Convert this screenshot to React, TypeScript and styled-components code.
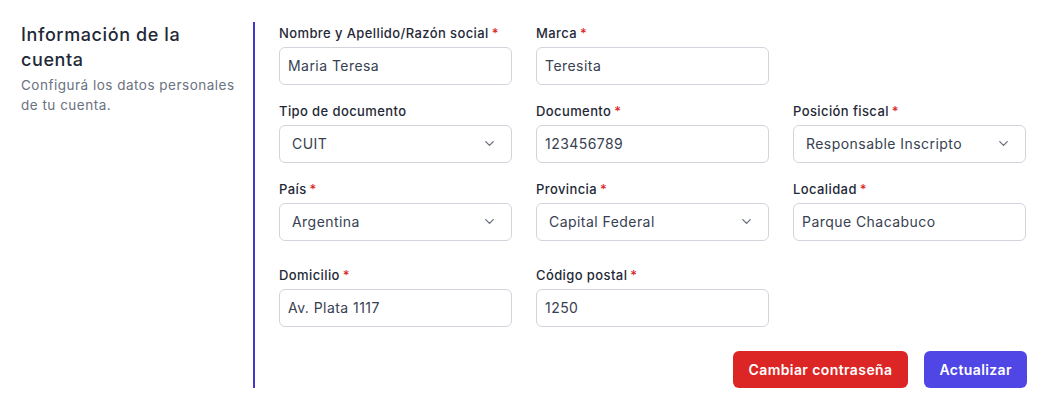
import React from "react";
import styled, { createGlobalStyle } from "styled-components";

const Global = createGlobalStyle`
  html, body { margin: 0; padding: 0; background: #ffffff; }
  body { font-family: "Inter", "Open Sans", sans-serif; color: #1f2937; }
  * { box-sizing: border-box; }
`;

const Page = styled.div`
  display: flex;
  align-items: stretch;
  padding: 22px 23px 19px 0;
  width: 1050px;
`;

const Aside = styled.aside`
  width: 253px;
  padding: 0 16px 0 21px;
  flex-shrink: 0;
`;

const Title = styled.h2`
  margin: 0;
  font-size: 18px;
  font-weight: 500;
  line-height: 25px;
  letter-spacing: 0.6px;
  color: #1f2937;
`;

const Subtitle = styled.p`
  margin: 4px 0 0;
  font-size: 13.5px;
  line-height: 19.5px;
  letter-spacing: 0.5px;
  color: #6b7280;
`;

const FormArea = styled.section`
  flex: 1;
  border-left: 2px solid #4338ca;
  padding: 2px 0 0 24px;
  display: flex;
  flex-direction: column;
`;

const Grid = styled.div`
  display: grid;
  grid-template-columns: repeat(3, 233px);
  column-gap: 24px;
  row-gap: 17px;
`;

const Field = styled.div<{ $spaced?: boolean; $col?: number }>`
  display: flex;
  flex-direction: column;
  gap: 5px;
  margin-top: ${(p) => (p.$spaced ? "8px" : "0")};
  grid-column: ${(p) => (p.$col ? `${p.$col}` : "auto")};
`;

const Label = styled.label`
  font-size: 13px;
  line-height: 18px;
  font-weight: 500;
  color: #1f2937;
  letter-spacing: 0.4px;
`;

const Star = styled.span`
  color: #dc2626;
  margin-left: 3px;
`;

const Box = styled.div<{ $select?: boolean }>`
  height: 38px;
  border: 1px solid #d1d5db;
  border-radius: 6px;
  display: flex;
  align-items: center;
  justify-content: space-between;
  padding: 0 ${(p) => (p.$select ? "14px 1px 12px" : "8px 1px")};
  font-size: 14px;
  color: #374151;
  letter-spacing: 0.45px;
  background: #fff;
`;

const Chevron = styled.svg`
  width: 15px;
  height: 15px;
  color: #6b7280;
`;

const Actions = styled.div`
  display: flex;
  justify-content: flex-end;
  gap: 16px;
  margin-top: 24px;
`;

const Button = styled.button<{ $variant: "danger" | "primary" }>`
  height: 37px;
  border: none;
  border-radius: 6px;
  padding: 0 ${(p) => (p.$variant === "danger" ? "16px" : "15px")};
  background: ${(p) => (p.$variant === "danger" ? "#dc2626" : "#4f46e5")};
  color: #fff;
  font-family: inherit;
  font-size: 14px;
  font-weight: 600;
  letter-spacing: 0.4px;
  cursor: pointer;
`;

type F = { label: string; value: string; required?: boolean; select?: boolean; spaced?: boolean; col?: number };

const fields: F[] = [
  { label: "Nombre y Apellido/Razón social", value: "Maria Teresa", required: true },
  { label: "Marca", value: "Teresita", required: true },
  { label: "Tipo de documento", value: "CUIT", select: true, col: 1 },
  { label: "Documento", value: "123456789", required: true },
  { label: "Posición fiscal", value: "Responsable Inscripto", required: true, select: true },
  { label: "País", value: "Argentina", required: true, select: true },
  { label: "Provincia", value: "Capital Federal", required: true, select: true },
  { label: "Localidad", value: "Parque Chacabuco", required: true },
  { label: "Domicilio", value: "Av. Plata 1117", required: true, spaced: true },
  { label: "Código postal", value: "1250", required: true, spaced: true },
];

export default function App() {
  return (
    <>
      <Global />
      <Page>
        <Aside>
          <Title>Información de la cuenta</Title>
          <Subtitle>Configurá los datos personales de tu cuenta.</Subtitle>
        </Aside>
        <FormArea>
          <Grid>
            {fields.map((f) => (
              <Field key={f.label} $spaced={f.spaced} $col={f.col}>
                <Label>
                  {f.label}
                  {f.required && <Star>*</Star>}
                </Label>
                <Box $select={f.select}>
                  <span>{f.value}</span>
                  {f.select && (
                    <Chevron viewBox="0 0 24 24" fill="none" stroke="currentColor" strokeWidth="2.2" strokeLinecap="round" strokeLinejoin="round">
                      <path d="M6 9l6 6 6-6" />
                    </Chevron>
                  )}
                </Box>
              </Field>
            ))}
          </Grid>
          <Actions>
            <Button $variant="danger">Cambiar contraseña</Button>
            <Button $variant="primary">Actualizar</Button>
          </Actions>
        </FormArea>
      </Page>
    </>
  );
}
